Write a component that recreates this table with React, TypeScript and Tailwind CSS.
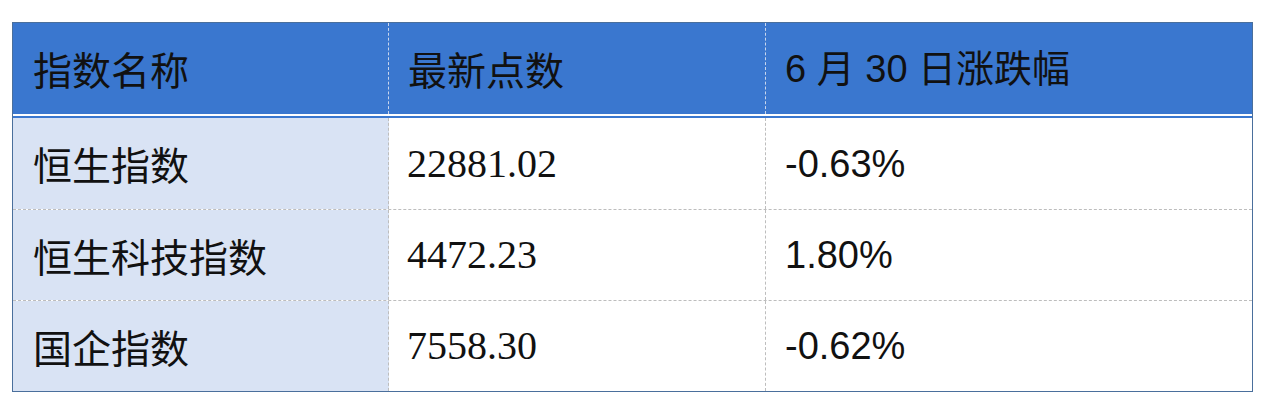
import React from "react";

const rows = [
  { name: "恒生指数", pts: "22881.02", chg: "-0.63%", h: "h-[92px]" },
  { name: "恒生科技指数", pts: "4472.23", chg: "1.80%", h: "h-[91px]" },
  { name: "国企指数", pts: "7558.30", chg: "-0.62%", h: "h-[90px]" },
];

const cjk = "font-['Noto_Sans_CJK_SC',sans-serif]";

export default function App() {
  return (
    <div className="w-[1280px] h-[419px] bg-white pt-[22px] pl-[12px]">
      <div className="w-[1241px] border border-[#4a6f9c] bg-white">
        <div className="grid grid-cols-[376px_377px_1fr] h-[91px] bg-[#3a77cf] text-[39px] text-[#111] leading-none">
          <div className={`flex items-center pl-[20px] border-r border-dashed border-[#c9d6ee] ${cjk}`}>指数名称</div>
          <div className={`flex items-center pl-[19px] border-r border-dashed border-[#c9d6ee] ${cjk}`}>最新点数</div>
          <div className="flex items-center pl-[19px] text-[38px] font-['Liberation_Sans','Noto_Sans_CJK_SC',sans-serif]">
            6 月 30 日涨跌幅
          </div>
        </div>
        <div className="h-[2px] bg-white" />
        <div className="h-[2px] bg-[#3a77cf]" />
        {rows.map((r, i) => (
          <div
            key={r.name}
            className={`grid grid-cols-[376px_377px_1fr] ${r.h} text-[#111] leading-none ${
              i < rows.length - 1 ? "border-b border-dashed border-[#bdbdbd]" : ""
            }`}
          >
            <div className={`flex items-center pl-[20px] text-[39px] bg-[#d9e3f4] border-r border-dashed border-[#bdbdbd] ${cjk}`}>
              {r.name}
            </div>
            <div className="flex items-center pl-[18px] text-[40px] border-r border-dashed border-[#bdbdbd] font-['Liberation_Serif',serif]">
              {r.pts}
            </div>
            <div className="flex items-center pl-[19px] text-[38px] font-['Liberation_Sans',sans-serif]">{r.chg}</div>
          </div>
        ))}
      </div>
    </div>
  );
}
